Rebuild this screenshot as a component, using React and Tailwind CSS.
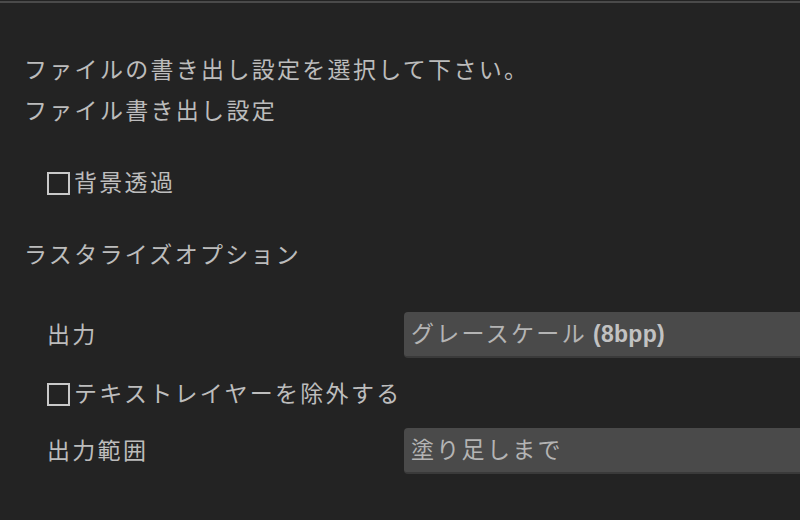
import React from 'react';

const Checkbox = ({ label }) => (
  <label className="flex items-center">
    <span className="w-[23px] h-[23px] border-2 border-[#c9c9c9] mr-[4px]" />
    <span className="text-[#bdbdbd]">{label}</span>
  </label>
);

const Select = ({ children }) => (
  <div className="flex-1 h-full flex items-center bg-[#4a4a4a] rounded-[4px] border-b-2 border-[#3a3a3a] pl-[7px] -mr-[10px] text-[#b4b4b4]">
    {children}
  </div>
);

const App = () => {
  return (
    <div
      className="w-[800px] h-[520px] overflow-hidden bg-[#232323] text-[23px] tracking-[2.3px] text-[#bcbcbc]"
      style={{ fontFamily: '"Liberation Sans", "Noto Sans CJK JP", sans-serif' }}
    >
      <div className="mt-px h-[2px] bg-[#4a4a4a]" />
      <div className="pl-[24px] pt-[47px] flex flex-col">
        <div className="h-[40px] flex items-center">ファイルの書き出し設定を選択して下さい。</div>
        <div className="mt-px h-[40px] flex items-center">ファイル書き出し設定</div>

        <div className="mt-[32px] h-[40px] flex items-center pl-[23px]">
          <Checkbox label="背景透過" />
        </div>

        <div className="mt-[32px] h-[40px] flex items-center">ラスタライズオプション</div>

        <div className="mt-[37px] h-[46px] flex items-center pl-[23px]">
          <span className="w-[357px] shrink-0">出力</span>
          <Select>
            グレースケール
            <span className="ml-[6px] tracking-[0.3px] font-bold text-[#c2c2c2]">(8bpp)</span>
          </Select>
        </div>

        <div className="mt-[16px] h-[40px] flex items-center pl-[23px]">
          <Checkbox label="テキストレイヤーを除外する" />
        </div>

        <div className="mt-[14px] h-[46px] flex items-center pl-[23px]">
          <span className="w-[357px] shrink-0">出力範囲</span>
          <Select>塗り足しまで</Select>
        </div>
      </div>
    </div>
  );
};

export default App;
